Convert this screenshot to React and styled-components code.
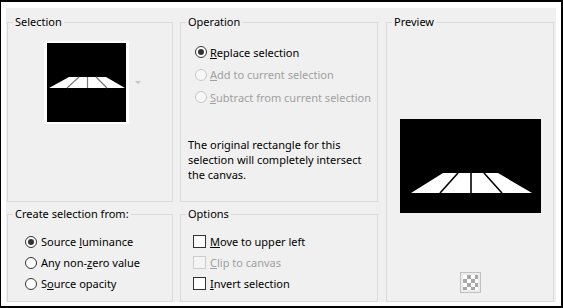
import React from 'react';
import styled, { createGlobalStyle } from 'styled-components';

const Global = createGlobalStyle`
  html, body { margin: 0; padding: 0; background: #fff; }
  body {
    font-family: "Noto Sans", "Open Sans", sans-serif;
    font-size: 11px;
    color: #000;
  }
`;

const Frame = styled.div`
  box-sizing: border-box;
  width: 563px;
  height: 308px;
  border: solid #000;
  border-width: 2px 2px 2px 1px;
  padding: 6px 5px 4px 5px;
  background: #fff;
`;

const Panel = styled.div`
  box-sizing: border-box;
  height: 100%;
  background: #f0f0f0;
  padding: 7px 0 0 1px;
  display: grid;
  grid-template-columns: 166px 198px 169px;
  grid-template-rows: 187px 95px;
  column-gap: 7px;
  row-gap: 5px;
`;

const Group = styled.fieldset`
  margin: 0;
  padding: 0;
  min-width: 0;
  border: 1px solid #d9d9d9;
  display: flex;
  flex-direction: column;
`;

const PreviewGroup = styled(Group)`
  grid-column: 3;
  grid-row: 1 / 3;
  margin-left: 1px;
`;

const Legend = styled.legend`
  margin-left: 5px;
  padding: 0 2px;
  line-height: 14px;
  font-size: 11px;
  color: #000;
`;

const ThumbRow = styled.div`
  display: flex;
  align-items: center;
  gap: 6px;
  padding: 12px 0 0 36px;
`;

const Thumb = styled.div`
  background: #fff;
  padding: 2px 3px;
  display: flex;
`;

const Caret = styled.span`
  width: 0;
  height: 0;
  border-left: 3px solid transparent;
  border-right: 3px solid transparent;
  border-top: 3px solid #c4c4c4;
`;

const OptionList = styled.div`
  display: flex;
  flex-direction: column;
  padding: ${(p) => p.$top}px 0 0 ${(p) => p.$left}px;
`;

const Option = styled.label`
  display: flex;
  align-items: center;
  gap: ${(p) => p.$gap}px;
  height: ${(p) => p.$h}px;
  white-space: nowrap;
  color: ${(p) => (p.$disabled ? '#a0a0a0' : '#000')};
  u { text-underline-offset: 1px; }
`;

const RadioMark = styled.span`
  box-sizing: border-box;
  flex: none;
  width: 12px;
  height: 12px;
  border-radius: 50%;
  border: 1px solid ${(p) => (p.$disabled ? '#c8c8c8' : '#333')};
  background: ${(p) => (p.$disabled ? '#f7f7f7' : '#fff')};
  display: flex;
  align-items: center;
  justify-content: center;
  &::after {
    content: '';
    width: 6px;
    height: 6px;
    border-radius: 50%;
    background: #333;
    display: ${(p) => (p.$checked ? 'block' : 'none')};
  }
`;

const CheckMark = styled.span`
  box-sizing: border-box;
  flex: none;
  width: 13px;
  height: 13px;
  border: 1px solid ${(p) => (p.$disabled ? '#cccccc' : '#333')};
  background: ${(p) => (p.$disabled ? '#f4f4f4' : '#fff')};
`;

const Note = styled.p`
  margin: 28px 0 0 7px;
  line-height: 15px;
  white-space: nowrap;
`;

const PreviewBody = styled.div`
  display: flex;
  flex-direction: column;
  align-items: center;
  padding-top: 90px;
`;

const Checker = styled.div`
  box-sizing: border-box;
  margin-top: 59px;
  width: 21px;
  height: 21px;
  padding: 2px;
  border: 1px solid #c0c0c0;
  background: #ececec;
  &::before {
    content: '';
    display: block;
    width: 15px;
    height: 15px;
    background-color: #fff;
    background-image: conic-gradient(#a8a8a8 25%, #fff 0 50%, #a8a8a8 0 75%, #fff 0);
    background-size: 8px 8px;
  }
`;

const Thumbnail = () => (
  <svg width="79" height="79" viewBox="0 0 79 79" style={{ display: 'block' }}>
    <rect width="79" height="79" fill="#000" />
    <polygon points="22,34 59,34 78,45 2,45" fill="#fff" />
    <g stroke="#7a7a7a" strokeWidth="1.2">
      <line x1="32" y1="34" x2="20" y2="45" />
      <line x1="40.5" y1="34" x2="40.5" y2="45" />
      <line x1="49" y1="34" x2="60" y2="45" />
    </g>
  </svg>
);

const PreviewImage = () => (
  <svg width="141" height="94" viewBox="0 0 141 94" style={{ display: 'block' }}>
    <rect width="141" height="94" fill="#000" />
    <polygon points="43,54 98,54 132,74 11,74" fill="#fff" />
    <g stroke="#000" strokeWidth="1.6">
      <line x1="58" y1="54" x2="40" y2="74" />
      <line x1="71" y1="54" x2="71" y2="74" />
      <line x1="84" y1="54" x2="102" y2="74" />
    </g>
  </svg>
);

const Radio = ({ checked, disabled, gap, h, children }) => (
  <Option $gap={gap} $h={h} $disabled={disabled}>
    <RadioMark $checked={checked} $disabled={disabled} />
    <span>{children}</span>
  </Option>
);

const Check = ({ disabled, children }) => (
  <Option $gap={4} $h={21} $disabled={disabled}>
    <CheckMark $disabled={disabled} />
    <span>{children}</span>
  </Option>
);

export default function App() {
  return (
    <>
      <Global />
      <Frame>
        <Panel>
          <Group>
            <Legend>Selection</Legend>
            <ThumbRow>
              <Thumb>
                <Thumbnail />
              </Thumb>
              <Caret />
            </ThumbRow>
          </Group>

          <Group>
            <Legend>Operation</Legend>
            <OptionList $top={12} $left={14}>
              <Radio checked gap={3} h={22.5}>
                <u>R</u>eplace selection
              </Radio>
              <Radio disabled gap={3} h={22.5}>
                <u>A</u>dd to current selection
              </Radio>
              <Radio disabled gap={3} h={22.5}>
                <u>S</u>ubtract from current selection
              </Radio>
            </OptionList>
            <Note>
              The original rectangle for this
              <br />
              selection will completely intersect
              <br />
              the canvas.
            </Note>
          </Group>

          <PreviewGroup>
            <Legend>Preview</Legend>
            <PreviewBody>
              <PreviewImage />
              <Checker />
            </PreviewBody>
          </PreviewGroup>

          <Group>
            <Legend>Create selection from:</Legend>
            <OptionList $top={10} $left={17}>
              <Radio checked gap={4} h={21}>
                Source <u>l</u>uminance
              </Radio>
              <Radio gap={4} h={21}>
                Any non-<u>z</u>ero value
              </Radio>
              <Radio gap={4} h={21}>
                S<u>o</u>urce opacity
              </Radio>
            </OptionList>
          </Group>

          <Group>
            <Legend>Options</Legend>
            <OptionList $top={10} $left={12}>
              <Check>
                <u>M</u>ove to upper left
              </Check>
              <Check disabled>
                <u>C</u>lip to canvas
              </Check>
              <Check>
                <u>I</u>nvert selection
              </Check>
            </OptionList>
          </Group>
        </Panel>
      </Frame>
    </>
  );
}
